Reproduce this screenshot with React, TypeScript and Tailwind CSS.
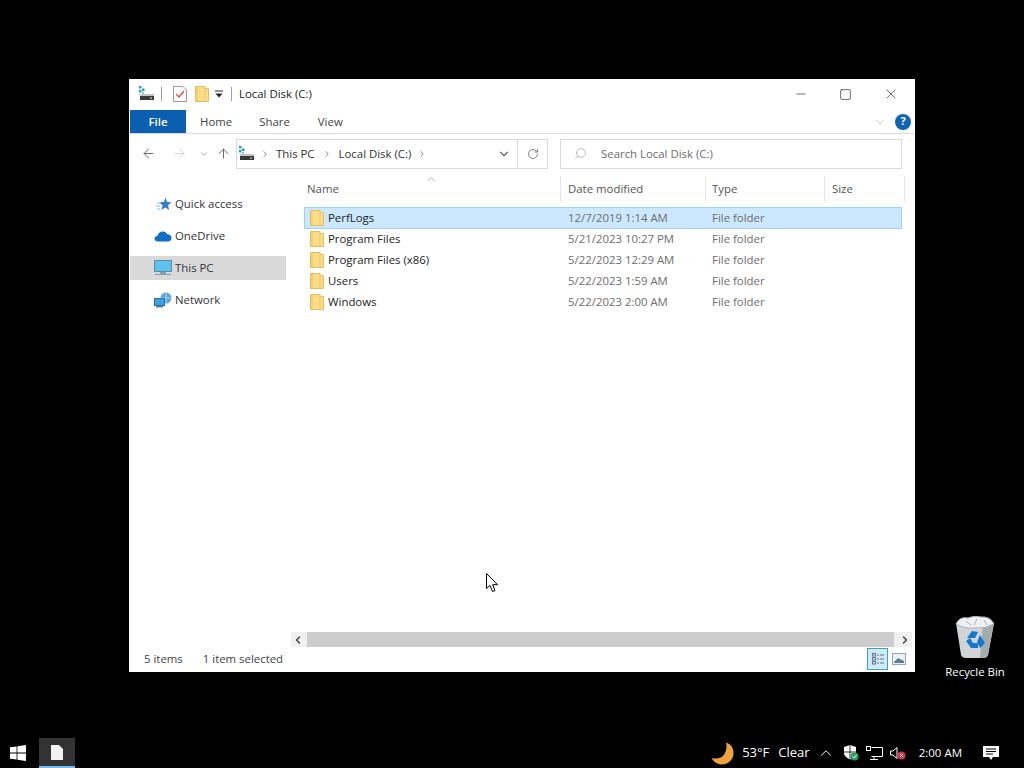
import React from "react";
import { ArrowLeft, ArrowRight, ArrowUp, ChevronDown, ChevronRight, ChevronLeft, ChevronUp, RotateCw, Search, Minus, X, Square } from "lucide-react";

const rows = [
  { name: "PerfLogs", date: "12/7/2019 1:14 AM", selected: true },
  { name: "Program Files", date: "5/21/2023 10:27 PM" },
  { name: "Program Files (x86)", date: "5/22/2023 12:29 AM" },
  { name: "Users", date: "5/22/2023 1:59 AM" },
  { name: "Windows", date: "5/22/2023 2:00 AM" },
];

const FolderIcon = ({ className = "" }: { className?: string }) => (
  <svg width="14" height="16" viewBox="0 0 14 16" className={className}>
    <path d="M0.5 0.5H10V2.5H13.5V15.5H0.5Z" fill="#fcdc85" stroke="#e3bf63" />
    <path d="M1 1H3V15H1Z" fill="#f3cf72" />
    <path d="M10 0.5V15.5" stroke="#eccb77" />
  </svg>
);

const DriveIcon = () => (
  <svg width="16" height="16" viewBox="0 0 16 16">
    <rect x="0" y="0" width="2.5" height="2.5" fill="#20a8a8" />
    <rect x="3" y="2.5" width="2.5" height="2.5" fill="#20a8a8" />
    <rect x="0" y="4" width="2.5" height="2.5" fill="#20a8a8" />
    <rect x="3" y="6" width="2" height="2" fill="#7fcfcf" />
    <rect x="1" y="8" width="14" height="2" fill="#c4c4c4" />
    <rect x="1" y="10" width="14" height="4" fill="#3a3a3a" />
    <rect x="11" y="11.5" width="2" height="1" fill="#e8e8e8" />
  </svg>
);

const QuickAccessIcon = () => (
  <svg width="16" height="16" viewBox="0 0 16 16">
    <path d="M9.5 1.5L11 6L15.5 6.3L12 9.2L13.2 14L9.3 11.4L5.4 14L6.6 9.2L3.2 6.3L7.9 6Z" fill="#2f82c8" />
    <path d="M1 7H5M0 10H4M1 13H4" stroke="#7db7e6" />
  </svg>
);

const CloudIcon = () => (
  <svg width="18" height="12" viewBox="0 0 18 12">
    <path d="M4 11.5C1.8 11.5 0.5 10.2 0.5 8.6C0.5 7 1.8 5.8 3.4 5.9C4 3.2 6.2 1.5 8.8 1.5C10.8 1.5 12.5 2.6 13.3 4.3C15.8 4.3 17.5 6 17.5 8C17.5 10 16 11.5 14 11.5Z" fill="#0f6fc6" />
  </svg>
);

const PcIcon = () => (
  <svg width="18" height="16" viewBox="0 0 18 16">
    <rect x="0.5" y="0.5" width="17" height="11" fill="#5fc2ee" stroke="#5a8ea8" />
    <rect x="6" y="12" width="6" height="2" fill="#8aa0ad" />
    <rect x="1" y="14" width="16" height="1" fill="#8b9aa3" />
  </svg>
);

const NetworkIcon = () => (
  <svg width="18" height="16" viewBox="0 0 18 16">
    <circle cx="12" cy="6" r="5.5" fill="#5aa8dc" />
    <path d="M12 0.5V11.5M6.5 6H17.5" stroke="#c9e6f7" strokeWidth="0.7" />
    <rect x="0.5" y="6.5" width="10" height="7" fill="#3f9fe0" stroke="#2a6f9f" />
    <rect x="2" y="14" width="7" height="1.5" fill="#5f7f94" />
  </svg>
);

const RecycleBinIcon = () => (
  <svg width="40" height="42" viewBox="0 0 40 42">
    <path d="M1 7L6 39Q7 42 11 42H28Q32 42 33 39L39 7Z" fill="#cfd5d8" />
    <path d="M28 7H39L33 39Q32 42 28 42H25Z" fill="#a4acb0" />
    <path d="M1 8Q5 0 13 2Q19 -1 26 1Q35 0 39 8Q30 13 20 12Q9 13 1 8Z" fill="#eef1f2" stroke="#aab1b5" />
    <path d="M11 5L16 9M22 3L19 9M29 4L32 9" stroke="#aab1b5" />
    <path d="M12 22L17 15L23 16L20 22ZM25 19L30 27L25 32L22 26ZM11 25L16 32H23V27H18L15 22Z" fill="#1478cc" />
  </svg>
);

const StartLogo = () => (
  <svg width="16" height="16" viewBox="0 0 16 16" fill="#fff">
    <path d="M0 2.3L6.6 1.4V7.6H0ZM7.4 1.3L16 0V7.6H7.4ZM0 8.4H6.6V14.6L0 13.7ZM7.4 8.4H16V16L7.4 14.7Z" />
  </svg>
);

const MoonIcon = () => (
  <svg width="23" height="23" viewBox="0 0 23 23">
    <path d="M15 0.5C20 2 23 6.5 22.5 12C22 18 17 22.5 11 22.5C6.5 22.5 2.5 20 0.5 16C6 17.5 11 16 13.5 12C15.5 8.5 16 4.5 15 0.5Z" fill="#eea23c" />
  </svg>
);

const App: React.FC = () => {
  return (
    <div className="relative flex h-screen w-full flex-col bg-black font-['Open_Sans','Noto_Sans',sans-serif] text-[11.4px] text-[#333]">
      {/* desktop */}
      <div className="relative flex-1">
        <div className="absolute left-[129px] top-[79px] flex h-[593px] w-[786px] flex-col bg-white">
          {/* title bar */}
          <div className="flex h-[31px] items-center pb-px">
            <div className="ml-[10px]"><DriveIcon /></div>
            <div className="ml-[6px] h-[14px] w-px bg-[#a0a0a0]" />
            <svg width="14" height="16" viewBox="0 0 14 16" className="ml-[11px]">
              <path d="M0.5 0.5H10L13.5 4V15.5H0.5Z" fill="#fff" stroke="#9a9a9a" />
              <path d="M3 8L6 11L11 5" fill="none" stroke="#d9534a" strokeWidth="1.4" />
            </svg>
            <FolderIcon className="ml-[8px]" />
            <svg width="8" height="8" viewBox="0 0 8 8" className="ml-[6px]">
              <path d="M0 1H8" stroke="#222" />
              <path d="M0.5 3.5H7.5L4 7.5Z" fill="#222" />
            </svg>
            <div className="ml-[8px] h-[14px] w-px bg-[#a0a0a0]" />
            <span className="ml-[7px] text-[#222]">Local Disk (C:)</span>
            <div className="ml-auto mr-px flex items-center text-[#222]">
              <div className="flex w-[45px] justify-center"><Minus size={14} strokeWidth={1.1} /></div>
              <div className="flex w-[45px] justify-center"><Square size={13} strokeWidth={1.2} /></div>
              <div className="flex w-[46px] justify-center"><X size={16} strokeWidth={1} /></div>
            </div>
          </div>
          {/* ribbon tabs */}
          <div className="flex h-[24px] items-stretch border-b border-[#dadbdc]">
            <div className="ml-px flex w-[56px] items-center justify-center bg-[#0a5fb0] font-semibold text-white">File</div>
            <div className="ml-[14px] flex items-center text-[#444]">Home</div>
            <div className="ml-[27px] flex items-center text-[#444]">Share</div>
            <div className="ml-[28px] flex items-center text-[#444]">View</div>
            <div className="ml-auto flex items-center">
              <ChevronDown size={14} strokeWidth={1.2} className="text-[#b5b5b5]" />
              <div className="ml-[8px] mr-[4px] flex h-[16px] w-[16px] items-center justify-center rounded-full bg-[#0f64b4] text-[11px] font-bold text-white">?</div>
            </div>
          </div>
          {/* address row */}
          <div className="flex h-[39px] items-center">
            <ArrowLeft size={15} strokeWidth={1.6} className="ml-[12px] text-[#6a6a6a]" />
            <ArrowRight size={15} strokeWidth={1.6} className="ml-[16px] text-[#d4d4d4]" />
            <ChevronDown size={10} strokeWidth={2} className="ml-[12px] text-[#9a9a9a]" />
            <ArrowUp size={15} strokeWidth={1.6} className="ml-[7px] text-[#6a6a6a]" />
            <div className="ml-[5px] flex h-[30px] w-[312px] items-center border border-[#d9d9d9]">
              <div className="ml-[2px]"><DriveIcon /></div>
              <ChevronRight size={10} strokeWidth={2} className="ml-[5px] text-[#777]" />
              <span className="ml-[6px] text-[#333]">This PC</span>
              <ChevronRight size={10} strokeWidth={2} className="ml-[7px] text-[#777]" />
              <span className="ml-[7px] text-[#333]">Local Disk (C:)</span>
              <ChevronRight size={10} strokeWidth={2} className="ml-[6px] text-[#777]" />
              <ChevronDown size={14} strokeWidth={2} className="ml-auto mr-[6px] text-[#666]" />
              <div className="flex h-full w-[30px] items-center justify-center border-l border-[#d9d9d9]">
                <RotateCw size={12} strokeWidth={1.6} className="text-[#666]" />
              </div>
            </div>
            <div className="ml-[12px] flex h-[30px] w-[342px] items-center border border-[#d9d9d9]">
              <Search size={13} strokeWidth={1.2} className="ml-[13px] -scale-x-100 text-[#999]" />
              <span className="ml-[14px] text-[#6d6d6d]">Search Local Disk (C:)</span>
            </div>
          </div>
          {/* main area */}
          <div className="flex min-h-0 flex-1">
            {/* nav pane */}
            <div className="flex w-[162px] flex-col pl-[1px] pt-[19px]">
              {[
                { label: "Quick access", icon: <QuickAccessIcon />, pad: "pl-[26px]", gap: "ml-[3px]" },
                { label: "OneDrive", icon: <CloudIcon />, pad: "pl-[24px]", gap: "ml-[3px]" },
                { label: "This PC", icon: <PcIcon />, pad: "pl-[24px]", gap: "ml-[3px]", active: true },
                { label: "Network", icon: <NetworkIcon />, pad: "pl-[24px]", gap: "ml-[3px]" },
              ].map((n) => (
                <div
                  key={n.label}
                  className={`mb-[8px] flex h-[24px] w-[156px] items-center pb-px text-[#333] ${n.pad} ${n.active ? "bg-[#d9d9d9]" : ""}`}
                >
                  {n.icon}
                  <span className={n.gap}>{n.label}</span>
                </div>
              ))}
            </div>
            {/* file list */}
            <div className="flex min-w-0 flex-1 flex-col">
              <div className="relative flex h-[34px] pb-[5px] pt-[3px] text-[#555]">
                <ChevronUp size={12} strokeWidth={1.2} className="absolute left-[134px] top-0 text-[#777]" />
                <div className="ml-[13px] flex w-[257px] items-center border-r border-[#e5e5e5] pl-[3px]">Name</div>
                <div className="flex w-[145px] items-center border-r border-[#e5e5e5] pl-[7px]">Date modified</div>
                <div className="flex w-[119px] items-center border-r border-[#e5e5e5] pl-[6px]">Type</div>
                <div className="flex w-[80px] items-center border-r border-[#e5e5e5] pl-[7px]">Size</div>
              </div>
              <div className="ml-[13px] flex flex-1 flex-col">
                {rows.map((r) => (
                  <div
                    key={r.name}
                    className={`flex w-[598px] items-center border ${r.selected ? "-mb-px h-[22px] border-[#99d1ff] bg-[#cce8ff]" : "h-[21px] border-transparent"}`}
                  >
                    <FolderIcon className="ml-[5px] shrink-0" />
                    <span className="ml-[4px] w-[240px] text-[#222]">{r.name}</span>
                    <span className="w-[144px] text-[#6d6d6d]">{r.date}</span>
                    <span className="text-[#6d6d6d]">File folder</span>
                  </div>
                ))}
              </div>
              {/* horizontal scrollbar */}
              <div className="mr-[3px] flex h-[15px] items-center bg-[#f0f0f0]">
                <ChevronLeft size={12} strokeWidth={3} className="ml-[1px] text-[#444]" />
                <div className="ml-[3px] h-full w-[587px] bg-[#cdcdcd]" />
                <ChevronRight size={12} strokeWidth={3} className="ml-auto mr-[1px] text-[#444]" />
              </div>
            </div>
          </div>
          {/* status bar */}
          <div className="flex h-[25px] items-center pb-px text-[#444]">
            <span className="ml-[15px]">5 items</span>
            <span className="ml-[20px]">1 item selected</span>
            <div className="ml-auto mr-[9px] flex items-center">
              <div className="flex h-[22px] w-[21px] items-center justify-center border border-[#3ea3c0] bg-[#cfe9f5]">
                <svg width="14" height="14" viewBox="0 0 14 14" fill="none" stroke="#5c7a88">
                  <rect x="1.5" y="1.5" width="3" height="2.5" />
                  <rect x="1.5" y="5.5" width="3" height="2.5" />
                  <rect x="1.5" y="9.5" width="3" height="2.5" />
                  <path d="M6 3H8M9 3H13M6 7H8M9 7H13M6 11H8M9 11H13" />
                </svg>
              </div>
              <svg width="14" height="12" viewBox="0 0 14 12" className="ml-[4px]">
                <rect x="0.5" y="0.5" width="13" height="11" fill="#eaf1f5" stroke="#9aa7ae" />
                <path d="M2 9L6 5L12 8V10H2Z" fill="#5d7f93" />
              </svg>
            </div>
          </div>
        </div>

        {/* recycle bin */}
        <div className="absolute left-[945px] top-[616px] flex w-[60px] flex-col items-center text-white">
          <RecycleBinIcon />
          <span className="mt-[5px] whitespace-nowrap">Recycle Bin</span>
        </div>

        {/* pointer */}
        <svg width="13" height="20" viewBox="0 0 13 20" className="absolute left-[486px] top-[573px]">
          <path d="M0.5 0.5V15.5L4 12.5L6.5 18.5L9 17.5L6.7 11.7H11.5Z" fill="#fff" stroke="#000" />
        </svg>
      </div>

      {/* taskbar */}
      <div className="flex h-[30px] items-center bg-black text-white">
        <div className="ml-[10px]"><StartLogo /></div>
        <div className="ml-[13px] flex h-full w-[36px] items-center justify-center border-b-2 border-[#76b9ed] bg-[#333]">
          <svg width="12" height="15" viewBox="0 0 12 15"><path d="M0 0H8L12 4V15H0Z" fill="#f2f2f2" /></svg>
        </div>
        <div className="ml-auto flex items-center text-[13px]">
          <MoonIcon />
          <span className="ml-[8px]">53°F</span>
          <span className="ml-[9px]">Clear</span>
          <ChevronUp size={18} strokeWidth={1.3} className="ml-[7px]" />
          <svg width="16" height="16" viewBox="0 0 16 16" className="ml-[8px]">
            <path d="M1 2L7 0L13 2V8C13 11 10 13 7 14.5C4 13 1 11 1 8Z" fill="#fff" />
            <path d="M7 0V14.5M1 7H13" stroke="#000" strokeWidth="0.8" />
            <circle cx="11.5" cy="11.5" r="4" fill="#2e9e5b" />
            <path d="M9.5 11.5L11 13L13.5 10" stroke="#fff" fill="none" />
          </svg>
          <svg width="17" height="15" viewBox="0 0 17 15" fill="none" stroke="#fff" className="ml-[7px]">
            <path d="M5.5 1.5H16.5V10.5H5.5M8 10.5V13.5M4 13.5H12" />
            <rect x="0.5" y="0.5" width="4" height="4" />
          </svg>
          <svg width="16" height="14" viewBox="0 0 16 14" className="ml-[7px]">
            <path d="M0.5 5H3L7 1.5V12.5L3 9H0.5Z" fill="none" stroke="#fff" />
            <circle cx="11.5" cy="9.5" r="4" fill="#d9354a" />
            <path d="M10 8L13 11M13 8L10 11" stroke="#fff" />
          </svg>
          <span className="ml-[13px] text-[11.5px]">2:00 AM</span>
          <svg width="16" height="16" viewBox="0 0 16 16" className="ml-[21px] mr-[25px]">
            <path d="M0 1H16V12H10L8 15L6 12H0Z" fill="#fff" />
            <path d="M3 4H13M3 6.5H13M3 9H10" stroke="#000" />
          </svg>
        </div>
      </div>
    </div>
  );
};

export default App;
